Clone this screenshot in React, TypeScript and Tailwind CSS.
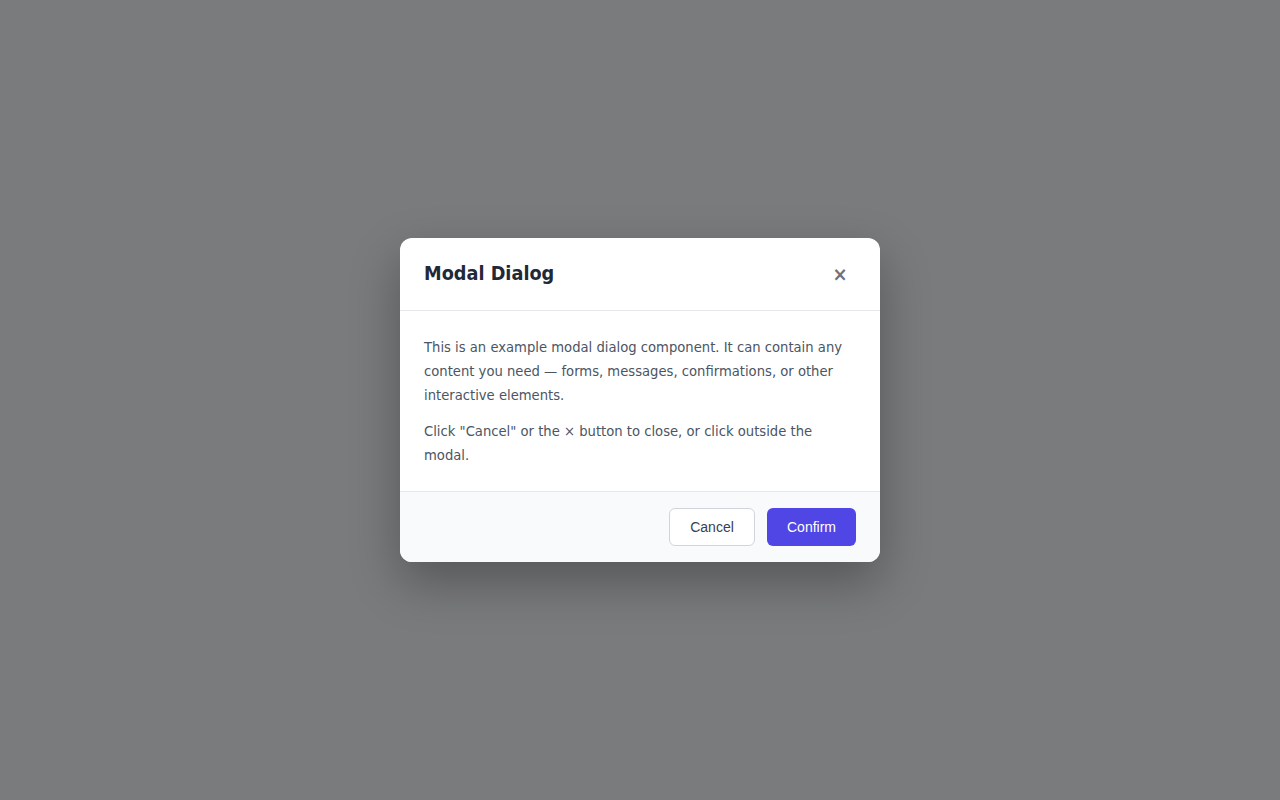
export default function App() {
  return (
    <div className="flex min-h-screen items-center justify-center bg-[#7a7b7d] font-['DejaVu_Sans_Condensed','DejaVu_Sans',sans-serif]">
      <div className="w-[480px] overflow-hidden rounded-xl bg-white shadow-[0_20px_50px_rgba(0,0,0,0.3)]">
        <div className="flex h-[73px] items-center justify-between border-b border-[#e5e7eb] px-6">
          <h2 className="text-[19.7px] font-bold text-[#1f2937]">Modal Dialog</h2>
          <button className="flex h-8 w-8 items-center justify-center text-xl font-bold leading-none text-[#6b7280]">
            ×
          </button>
        </div>
        <div className="space-y-3 px-6 py-6 text-[14.65px] leading-6 text-[#4b5563]">
          <p>
            This is an example modal dialog component. It can contain any content you need — forms,
            messages, confirmations, or other interactive elements.
          </p>
          <p>Click "Cancel" or the × button to close, or click outside the modal.</p>
        </div>
        <div className="flex justify-end gap-3 border-t border-[#e5e7eb] bg-[#f9fafb] px-6 py-4 font-['Liberation_Sans',Arial,sans-serif] text-sm">
          <button className="h-[38px] w-[86px] rounded-md border border-[#d1d5db] bg-white text-[#374151]">
            Cancel
          </button>
          <button className="h-[38px] w-[89px] rounded-md bg-[#4f46e5] text-white">Confirm</button>
        </div>
      </div>
    </div>
  );
}
